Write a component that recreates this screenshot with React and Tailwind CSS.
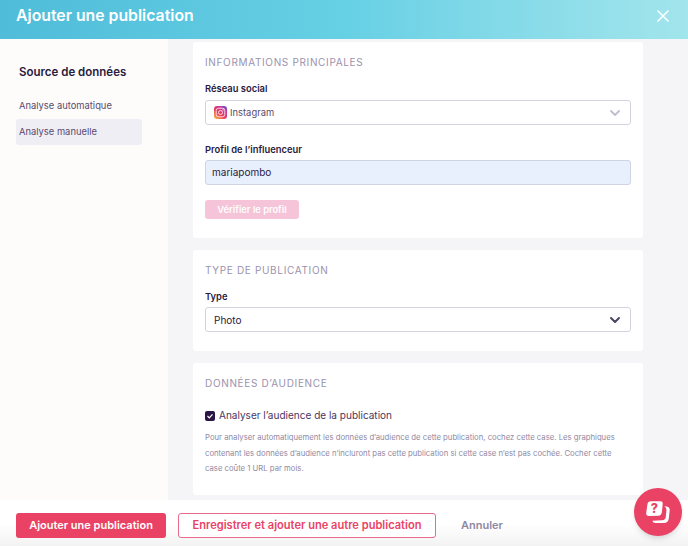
import React from "react";

const font = { fontFamily: '"Inter", "Liberation Sans", sans-serif' };

function Chevron({ className }) {
  return (
    <svg className={className} width="12" height="8" viewBox="0 0 12 8" fill="none" stroke="currentColor" strokeWidth="2" strokeLinecap="round" strokeLinejoin="round">
      <path d="M2 2 L6 6 L10 2" />
    </svg>
  );
}

function InstagramIcon() {
  return (
    <svg width="13" height="13" viewBox="0 0 13 13" className="shrink-0">
      <defs>
        <linearGradient id="ig" x1="0.1" y1="1" x2="0.9" y2="0">
          <stop offset="0" stopColor="#f9b13f" />
          <stop offset="0.4" stopColor="#ea3f5e" />
          <stop offset="0.75" stopColor="#c2369b" />
          <stop offset="1" stopColor="#6a4fd0" />
        </linearGradient>
      </defs>
      <rect width="13" height="13" rx="3" fill="url(#ig)" />
      <rect x="2.2" y="2.2" width="8.6" height="8.6" rx="2.4" fill="none" stroke="#fbd9e0" strokeWidth="1" />
      <circle cx="6.5" cy="6.5" r="2" fill="none" stroke="#fbd9e0" strokeWidth="1" />
      <circle cx="9.1" cy="3.9" r="0.6" fill="#fff" />
    </svg>
  );
}

function HelpIcon() {
  return (
    <svg width="24" height="23" viewBox="0 0 24 23">
      <path d="M18.4 5 C21.5 5.4 23.9 6.4 23.7 9 L22.8 17.5 C22.4 20.4 20.8 22 18 22 L9.5 22 C7.8 22 6.8 21.2 6.5 19.8 L16.5 19.2 C18.4 19 19.6 18 19.8 16 L20.4 9.5 C20.5 7.6 19.8 6.4 18.4 5 Z" fill="#fff" />
      <path d="M5 0.3 L14.4 0.3 C16 0.3 16.9 1.3 16.7 3 L15.9 11 C15.6 13.2 14.4 14.6 12.2 14.8 L3 15 C1 15 0 13.9 0.2 12 L1.4 3.4 C1.7 1.4 3 0.3 5 0.3 Z" fill="#fff" />
      <text x="8.4" y="12.3" textAnchor="middle" fontSize="12.5" fontWeight="800" fill="#ea4265" style={font}>?</text>
    </svg>
  );
}

function SectionTitle({ children }) {
  return <h2 className="text-[10px] leading-[14px] tracking-[0.066em] font-normal text-[#9a92ad]">{children}</h2>;
}

function Label({ children }) {
  return <div className="text-[9.4px] leading-[14px] font-semibold text-[#2a1a3e]">{children}</div>;
}

export default function App() {
  return (
    <div style={font} className="w-[688px] h-[546px] overflow-hidden flex flex-col relative bg-white">
      <header className="h-[39px] shrink-0 flex items-center justify-between pl-4 pr-[19px] pb-[7px] bg-gradient-to-r from-[#4fbcd9] via-[#66d0e4] to-[#a2e5ec]">
        <h1 className="text-[15.8px] font-semibold text-white">Ajouter une publication</h1>
        <svg width="12" height="12" viewBox="0 0 12 12" stroke="#fff" strokeWidth="1.6" strokeLinecap="round">
          <path d="M1 1 L11 11 M11 1 L1 11" />
        </svg>
      </header>

      <div className="h-[461px] shrink-0 flex bg-[#f5f5f7]">
        <aside className="w-[168px] shrink-0 bg-[#fdfcfb] pt-[25px] pl-4 pr-[26px]">
          <h3 className="pl-[3px] text-[11.5px] leading-[16px] font-semibold text-[#2a1a3e]">Source de données</h3>
          <div className="mt-[13px] h-[26px] flex items-center pl-[3px] text-[9.4px] text-[#5a4a6e]">Analyse automatique</div>
          <div className="h-[26px] flex items-center pl-[3px] rounded-[3px] bg-[#efeef5] text-[9.4px] text-[#5a4a6e]">Analyse manuelle</div>
        </aside>

        <main className="w-[450px] ml-[25px] pt-[3px] flex flex-col gap-3">
          <section className="h-[196px] shrink-0 bg-white rounded-[3px] px-3 pt-[13px]">
            <SectionTitle>INFORMATIONS PRINCIPALES</SectionTitle>
            <div className="mt-[13px]"><Label>Réseau social</Label></div>
            <div className="mt-[4px] h-[25px] flex items-center justify-between border border-[#d5d2e0] rounded-[3px] pl-2 pr-[9px]">
              <span className="flex items-center gap-[3px] text-[9.4px] text-[#5a4a6e]"><InstagramIcon /><span className="pt-px">Instagram</span></span>
              <Chevron className="text-[#c4c0d0]" />
            </div>
            <div className="mt-[18px]"><Label>Profil de l’influenceur</Label></div>
            <div className="mt-[3px] h-[25px] flex items-center border border-[#cfd3e2] rounded-[3px] bg-[#e8f0fe] px-[6px] text-[10px] text-[#2a1a3e]">mariapombo</div>
            <button className="mt-[15px] h-[19px] w-[94px] rounded-[3px] bg-[#f6c4d8] text-[9.3px] font-semibold text-white">Vérifier le profil</button>
          </section>

          <section className="h-[101px] shrink-0 bg-white rounded-[3px] px-3 pt-[13px]">
            <SectionTitle>TYPE DE PUBLICATION</SectionTitle>
            <div className="mt-[13px]"><Label>Type</Label></div>
            <div className="mt-[3px] h-[25px] flex items-center justify-between border border-[#d5d2e0] rounded-[3px] pl-2 pr-[9px]">
              <span className="pt-px text-[10px] text-[#2a1a3e]">Photo</span>
              <Chevron className="text-[#4a4560]" />
            </div>
          </section>

          <section className="h-[132px] shrink-0 bg-white rounded-[3px] px-3 pt-[13px]">
            <SectionTitle>DONNÉES D’AUDIENCE</SectionTitle>
            <label className="mt-[18px] flex items-center gap-[4px] text-[10.04px] leading-[14px] text-[#4a3560]">
              <span className="w-[10px] h-[10px] rounded-[2px] bg-[#2a1545] flex items-center justify-center shrink-0 mt-px">
                <svg width="8" height="8" viewBox="0 0 8 8" fill="none" stroke="#fff" strokeWidth="1.2"><path d="M1.5 4 L3.3 5.8 L6.5 2.4" /></svg>
              </span>
              Analyser l’audience de la publication
            </label>
            <p className="mt-[8px] text-[7.73px] leading-[15.5px] text-[#8f88a2]">
              Pour analyser automatiquement les données d’audience de cette publication, cochez cette case. Les graphiques contenant les données d’audience n’incluront pas cette publication si cette case n’est pas cochée. Cocher cette case coûte 1 URL par mois.
            </p>
          </section>
        </main>
      </div>

      <footer className="flex-1 flex items-start pt-[13px] pl-4 bg-gradient-to-b from-white from-50% to-[#f3f3f3]">
        <button className="h-[25px] w-[150px] rounded-[3px] bg-[#ea4265] text-[11px] font-semibold text-white">Ajouter une publication</button>
        <button className="ml-3 h-[25px] w-[258px] rounded-[3px] border border-[#ea6a8a] bg-white text-[11.1px] font-semibold text-[#ea4265]">Enregistrer et ajouter une autre publication</button>
        <button className="ml-[25px] h-[25px] text-[11px] font-semibold text-[#8f88a2]">Annuler</button>
      </footer>

      <div className="absolute left-[634px] top-[488px] w-[48px] h-[48px] rounded-full bg-[#ea4265] flex items-center justify-center shadow-md">
        <HelpIcon />
      </div>
    </div>
  );
}
